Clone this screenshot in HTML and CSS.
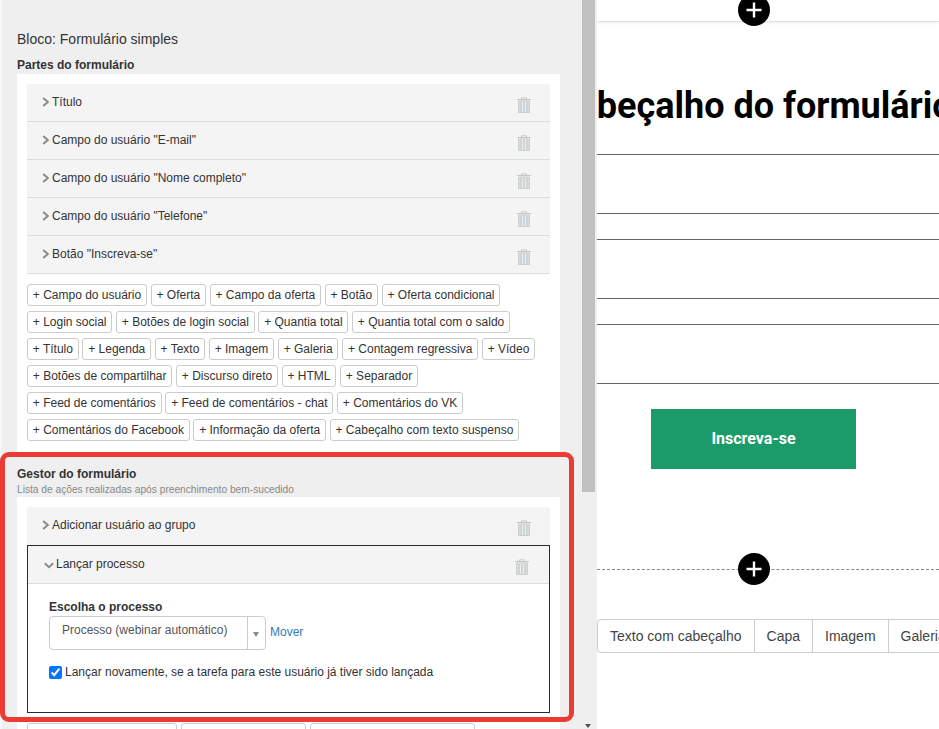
FILE: index.html
```html
<!DOCTYPE html>
<html lang="pt">
<head>
<meta charset="utf-8">
<title>Bloco: Formulário simples</title>
<link rel="stylesheet" href="styles.css">
</head>
<body>
<svg class="defs" width="0" height="0" aria-hidden="true">
  <symbol id="trash" viewBox="0 0 14 16">
    <path d="M4.5 2.5V.8h5v1.7" fill="none" stroke="#c9c9c9"/>
    <path d="M0 2.5h14" stroke="#c4c4c4" stroke-width="1"/>
    <path d="M1.5 4h11v11.5h-11z" fill="#dcdcdc" stroke="#cdcdcd"/>
    <path d="M4 5v10M7 5v10M10 5v10" stroke="#c2d0da" stroke-width="1"/>
    <path d="M5.5 5v10M8.5 5v10" stroke="#f1ebe2" stroke-width="1"/>
  </symbol>
  <symbol id="chev-r" viewBox="0 0 8 10">
    <path d="M1.2 1l4.6 4-4.6 4" fill="none" stroke="#8a8a8a" stroke-width="2"/>
  </symbol>
  <symbol id="chev-d" viewBox="0 0 10 7">
    <path d="M.8 1.2l4.2 4 4.2-4" fill="none" stroke="#8a8a8a" stroke-width="2"/>
  </symbol>
  <symbol id="plus" viewBox="0 0 32 32">
    <circle cx="16" cy="16" r="16" fill="#000"/>
    <path d="M16 8.5v15M8.5 16h15" stroke="#fff" stroke-width="2.4"/>
  </symbol>
</svg>

<div class="app">
  <aside class="sidebar">
    <div class="sidebar-body">
      <h1 class="block-title">Bloco: Formulário simples</h1>
      <h2 class="section-title">Partes do formulário</h2>
      <section class="panel panel-parts">
        <ul class="rows">
          <li class="row"><svg class="chev"><use href="#chev-r"/></svg><span class="row-label">Título</span><svg class="trash"><use href="#trash"/></svg></li>
          <li class="row"><svg class="chev"><use href="#chev-r"/></svg><span class="row-label">Campo do usuário "E-mail"</span><svg class="trash"><use href="#trash"/></svg></li>
          <li class="row"><svg class="chev"><use href="#chev-r"/></svg><span class="row-label">Campo do usuário "Nome completo"</span><svg class="trash"><use href="#trash"/></svg></li>
          <li class="row"><svg class="chev"><use href="#chev-r"/></svg><span class="row-label">Campo do usuário "Telefone"</span><svg class="trash"><use href="#trash"/></svg></li>
          <li class="row"><svg class="chev"><use href="#chev-r"/></svg><span class="row-label">Botão "Inscreva-se"</span><svg class="trash"><use href="#trash"/></svg></li>
        </ul>
        <div class="adders">
          <button class="add">+ Campo do usuário</button>
          <button class="add">+ Oferta</button>
          <button class="add">+ Campo da oferta</button>
          <button class="add">+ Botão</button>
          <button class="add">+ Oferta condicional</button>
          <button class="add">+ Login social</button>
          <button class="add">+ Botões de login social</button>
          <button class="add">+ Quantia total</button>
          <button class="add">+ Quantia total com o saldo</button>
          <button class="add">+ Título</button>
          <button class="add">+ Legenda</button>
          <button class="add">+ Texto</button>
          <button class="add">+ Imagem</button>
          <button class="add">+ Galeria</button>
          <button class="add">+ Contagem regressiva</button>
          <button class="add">+ Vídeo</button>
          <button class="add">+ Botões de compartilhar</button>
          <button class="add">+ Discurso direto</button>
          <button class="add">+ HTML</button>
          <button class="add">+ Separador</button>
          <button class="add">+ Feed de comentários</button>
          <button class="add">+ Feed de comentários - chat</button>
          <button class="add">+ Comentários do VK</button>
          <button class="add">+ Comentários do Facebook</button>
          <button class="add">+ Informação da oferta</button>
          <button class="add">+ Cabeçalho com texto suspenso</button>
        </div>
      </section>
      <div class="manager-head">
        <h2 class="section-title">Gestor do formulário</h2>
        <p class="section-sub">Lista de ações realizadas após preenchimento bem-sucedido</p>
      </div>
      <section class="panel panel-manager">
        <div class="row"><svg class="chev"><use href="#chev-r"/></svg><span class="row-label">Adicionar usuário ao grupo</span><svg class="trash"><use href="#trash"/></svg></div>
        <div class="open-item">
          <div class="row row-open"><svg class="chev-down"><use href="#chev-d"/></svg><span class="row-label">Lançar processo</span><svg class="trash"><use href="#trash"/></svg></div>
          <div class="open-body">
            <label class="field-label">Escolha o processo</label>
            <div class="field-line">
              <div class="select">
                <span class="select-value">Processo (webinar automático)</span>
                <span class="select-arrow"></span>
              </div>
              <a class="move" href="#">Mover</a>
            </div>
            <label class="check-line"><input class="check" type="checkbox" checked><span>Lançar novamente, se a tarefa para este usuário já tiver sido lançada</span></label>
          </div>
        </div>
        <div class="adders adders-bottom">
          <button class="add add-a">+ Criar notificação push</button>
          <button class="add add-b">+ Enviar mensagem</button>
          <button class="add add-c">+ Criar notificação interna</button>
        </div>
      </section>
    </div>
    <div class="scrollbar"><div class="scroll-thumb"></div><div class="scroll-arrow"></div></div>
    <div class="highlight"></div>
  </aside>

  <main class="canvas">
    <div class="top-strip"><svg class="plus plus-top"><use href="#plus"/></svg></div>
    <h2 class="form-heading">Cabeçalho do formulário</h2>
    <div class="field"></div>
    <div class="field"></div>
    <div class="field"></div>
    <button class="subscribe">Inscreva-se</button>
    <div class="divider"><svg class="plus"><use href="#plus"/></svg></div>
    <div class="tabs">
      <span class="tab">Texto com cabeçalho</span>
      <span class="tab">Capa</span>
      <span class="tab">Imagem</span>
      <span class="tab">Galeria</span>
    </div>
  </main>
</div>
</body>
</html>
```
FILE: styles.css
```css
* { box-sizing: border-box; }
html, body { margin: 0; padding: 0; height: 100%; overflow: hidden; background: #fff; }
body { font-family: "Liberation Sans", Arial, sans-serif; font-size: 12px; color: #333; }
.defs { position: absolute; }
.app { display: flex; width: 939px; height: 729px; overflow: hidden; }

.sidebar { position: relative; flex: 0 0 597px; height: 729px; display: flex; overflow: hidden; background: #efefef; box-shadow: inset 2px 0 0 #f8f8f8; }
.sidebar-body { flex: 0 0 582px; height: 729px; overflow: hidden; padding: 31px 22px 0 17px; }
.block-title { margin: 0; font-size: 14px; font-weight: 400; line-height: 16px; color: #333; }
.section-title { margin: 11px 0 0; font-size: 12px; font-weight: 700; line-height: 14px; color: #333; }
.panel { background: #fff; padding: 10px 10px 0; }
.panel-parts { margin-top: 2px; height: 381px; }
.rows { list-style: none; margin: 0; padding: 0; }
.row { display: flex; align-items: center; height: 38px; padding-left: 15px; padding-right: 19px; background: #f4f4f4; border-bottom: 1px solid #dcdcdc; color: #333; }
.rows .row:first-child, .panel-manager > .row { border-radius: 3px 3px 0 0; }
.panel-manager > .row { border-bottom: 0; padding-bottom: 1px; }
.chev { width: 8px; height: 10px; margin-right: 2px; margin-bottom: 1px; flex: none; }
.chev-down { width: 10px; height: 7px; margin: 2px 2px 0 1px; flex: none; }
.row-label { flex: 1; line-height: 14px; margin-top: -1px; }
.trash { width: 14px; height: 16px; flex: none; margin-top: 5px; }

.adders { display: flex; flex-wrap: wrap; gap: 5px 3.7px; padding-top: 10px; }
.add { height: 22px; padding: 0 4.8px; background: #fff; border: 1px solid #ccc; border-radius: 3px; font: 12px/18px "Liberation Sans", Arial, sans-serif; color: #333; white-space: nowrap; }

.manager-head { padding-top: 12px; height: 42px; }
.manager-head .section-title { margin: 0; }
.section-sub { margin: 3px 0 0; font-size: 10.2px; line-height: 11px; color: #888; }
.panel-manager { height: 300px; }
.open-item { border: 1px solid #2b2b2b; height: 168px; background: #fff; }
.row-open { padding-left: 15px; padding-right: 20px; }
.open-body { padding: 16px 21px 0; }
.field-label { display: block; font-size: 12px; font-weight: 700; line-height: 14px; color: #333; }
.field-line { display: flex; align-items: center; margin-top: 2px; }
.select { display: flex; width: 217px; height: 34px; border: 1px solid #ccc; border-radius: 4px; background: #fff; }
.select-value { flex: 1; padding: 6px 0 0 12px; line-height: 14px; color: #555; }
.select-arrow { position: relative; flex: 0 0 18px; border-left: 1px solid #ccc; }
.select-arrow::after { content: ""; position: absolute; left: 5px; top: 15px; border: 3.5px solid transparent; border-top: 5px solid #888; border-bottom: 0; }
.move { margin: -2px 0 0 4px; color: #337ab7; text-decoration: none; }
.check-line { display: flex; align-items: center; margin-top: 15px; color: #333; }
.check { width: 13px; height: 13px; margin: 0 3px 0 0; accent-color: #0075ff; }
.adders-bottom { gap: 4px; padding-top: 10px; }
.add-a, .add-b, .add-c { text-align: left; padding: 0 5px; }
.add-a { width: 150px; }
.add-b { width: 125px; }
.add-c { width: 165px; }

.scrollbar { position: relative; flex: 0 0 13px; height: 729px; }
.scroll-thumb { height: 492px; background: #c0c0c0; }
.scroll-arrow { position: absolute; left: 3px; bottom: 1px; border: 3.5px solid transparent; border-top: 4px solid #505050; border-bottom: 0; }
.highlight { position: absolute; left: 0; top: 452px; width: 574px; height: 270px; border: 5px solid #ea3b34; border-radius: 9px; pointer-events: none; }

.canvas { flex: 1; min-width: 0; height: 729px; overflow: hidden; background: #fff; }
.top-strip { position: relative; height: 22px; border-bottom: 1px solid #e2e2e2; box-shadow: 0 1px 3px rgba(0,0,0,.08); }
.plus { position: absolute; left: 141px; width: 32px; height: 32px; }
.plus-top { top: -6px; }
.form-heading { margin: 63px 0 0 -43px; font-family: Roboto, sans-serif; font-size: 36px; font-weight: 700; line-height: 42px; color: #000; white-space: nowrap; }
.field { height: 60px; margin-top: 25px; border-top: 1px solid #666; border-bottom: 1px solid #666; }
.form-heading + .field { margin-top: 27px; }
.subscribe { display: block; width: 205px; height: 60px; margin: 25px 0 0 54px; padding: 0 0 2px; border: 0; background: #1b9b69; color: #fff; font: 700 16px Roboto, sans-serif; }
.divider { position: relative; height: 1px; margin-top: 100px; border-top: 1px dashed #888; }
.divider .plus { top: -17px; }
.tabs { display: flex; margin-top: 49px; height: 34px; }
.tab { flex: none; padding: 0 12px; line-height: 32px; font-size: 14px; color: #444; border: 1px solid #ccc; border-left: 0; white-space: nowrap; }
.tab:first-child { border-left: 1px solid #ccc; border-radius: 4px 0 0 4px; }
```
